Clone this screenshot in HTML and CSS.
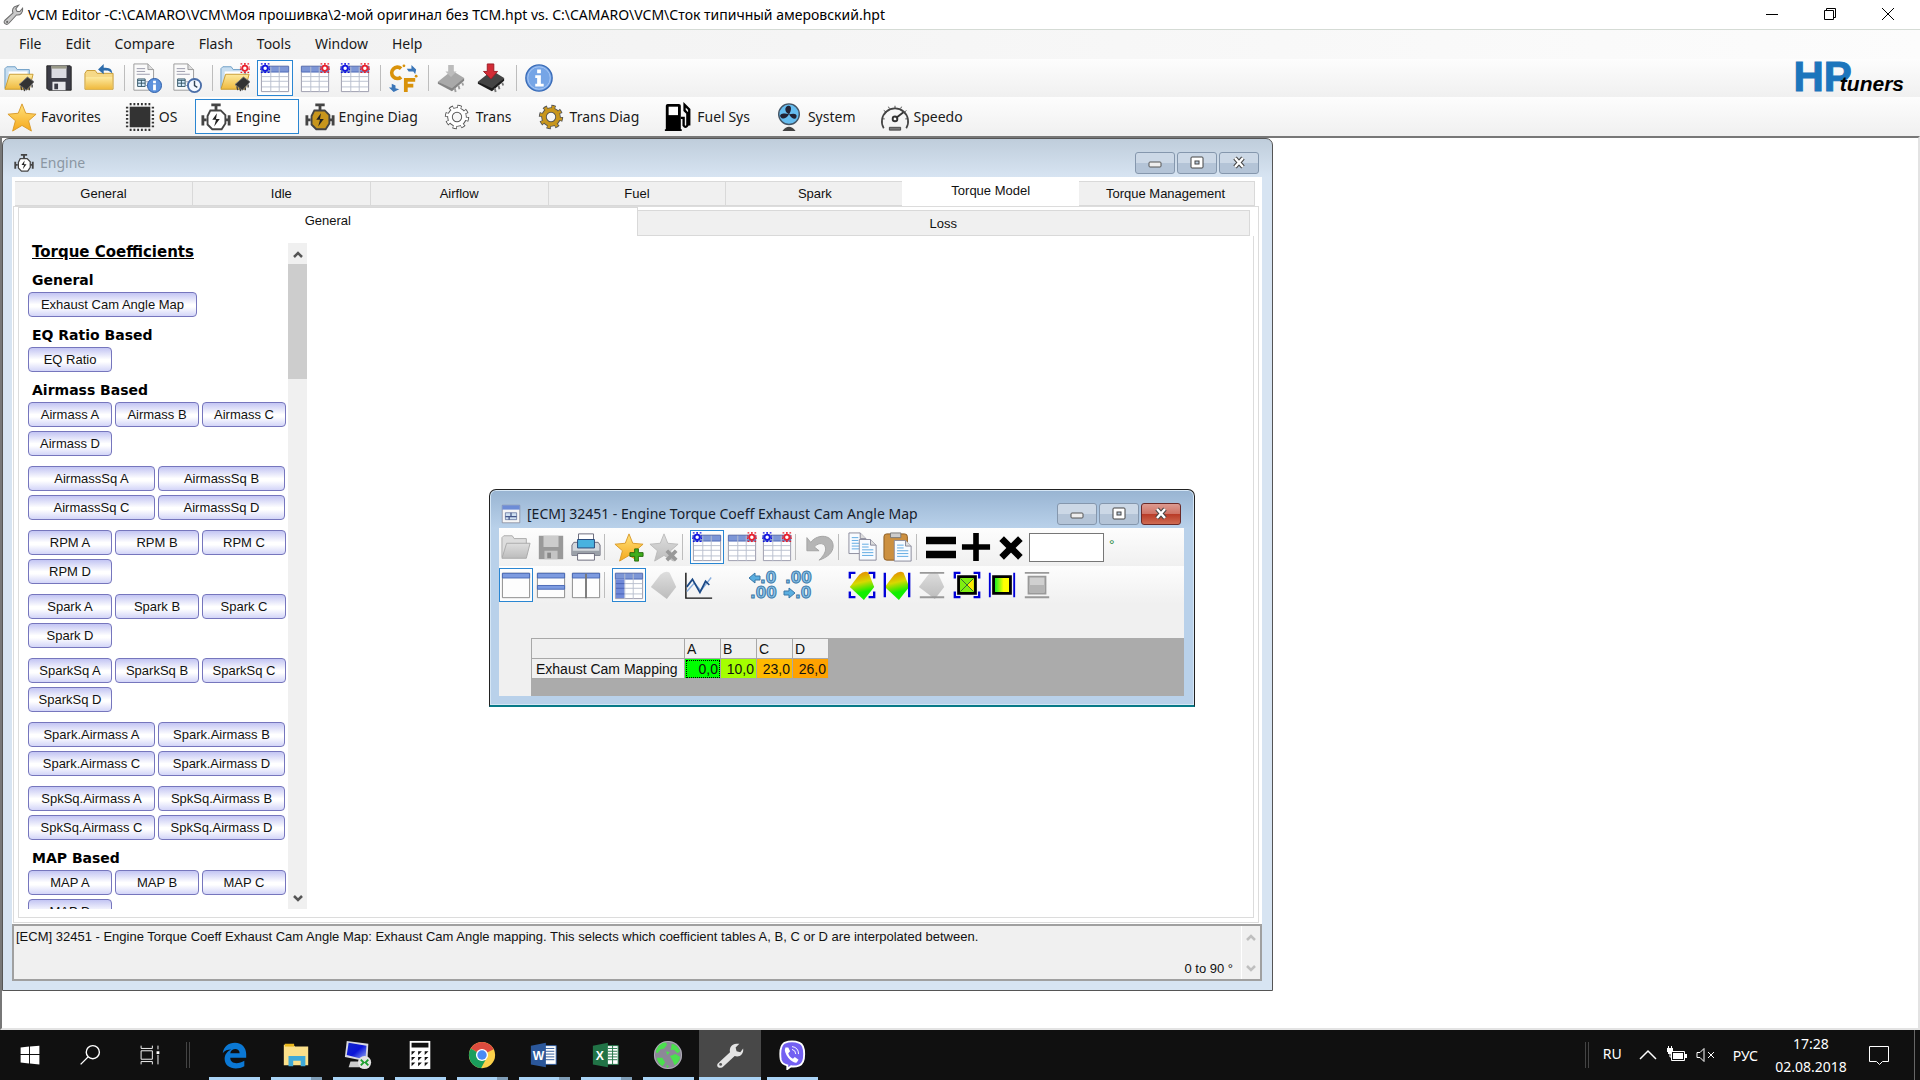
FILE: index.html
```html
<!DOCTYPE html>
<html lang="ru">
<head>
    <meta charset="UTF-8">
    <meta name="viewport" content="width=device-width, initial-scale=1.0">
    <title>VCM Editor</title>
    <link rel="stylesheet" href="styles.css">
</head>
<body>
    <!-- Icon set -->
    <svg class="sprite" aria-hidden="true">
        <defs>
            <linearGradient id="gFolder" x1="0" y1="0" x2="0" y2="1"><stop offset="0" stop-color="#fdeaa0"/><stop offset="1" stop-color="#efb93d"/></linearGradient>
            <linearGradient id="gGrey" x1="0" y1="0" x2="0" y2="1"><stop offset="0" stop-color="#dedede"/><stop offset="1" stop-color="#bcbcbc"/></linearGradient>
            <linearGradient id="gStar" x1="0" y1="0" x2="0" y2="1"><stop offset="0" stop-color="#ffe27a"/><stop offset="1" stop-color="#f5a81c"/></linearGradient>
            <linearGradient id="gHeat" x1="0" y1="0" x2="0.2" y2="1"><stop offset="0" stop-color="#e87a00"/><stop offset="0.45" stop-color="#d8d800"/><stop offset="0.8" stop-color="#10ee00"/></linearGradient>
            <linearGradient id="gBox" x1="0" y1="0" x2="1" y2="0"><stop offset="0.1" stop-color="#22ee22"/><stop offset="0.6" stop-color="#ffff00"/></linearGradient>
            <linearGradient id="gScreen" x1="0" y1="0" x2="1" y2="1"><stop offset="0" stop-color="#1428c8"/><stop offset="0.5" stop-color="#0a14d8"/><stop offset="1" stop-color="#9db4f5"/></linearGradient>
        </defs>
        <symbol id="wrench" viewBox="0 0 32 32"><path d="M4 24 16 13c-2-4 0-9 5-10l3-1-4 5 2 4 4 0 4-5c1 6-3 11-9 10L10 28c-4 4-9-1-6-4z" fill="#c9c9c9" stroke="#6d6d6d" stroke-width="1.5"/><circle cx="7.500" cy="26" r="1.500" fill="#666"/></symbol>
        <symbol id="chipmini" viewBox="0 0 32 32"><path d="M16 23 25 15l7 5-8 9z" fill="#333" stroke="#777" stroke-width="1"/><path d="m18 25 1 4m2-3 1 4m5-4v3m3-6v3" stroke="#444" stroke-width="1.500"/></symbol>
        <symbol id="folder" viewBox="0 0 32 32"><path d="M1 27V6l2-2h9l2 3h13v6" fill="#c8def0" stroke="#6a9cc4"/><path d="M5 9h20v4H5z" fill="#fff"/><path d="M1 28 6 12h25l-4 16z" fill="url(#gFolder)" stroke="#c79a30"/></symbol>
        <symbol id="open" viewBox="0 0 32 32"><use href="#folder"/><use href="#chipmini"/></symbol>
        <symbol id="save" viewBox="0 0 32 32"><path d="M3 3h25l1 1v25H5l-2-2z" fill="#3c3c46" stroke="#222"/><path d="M8 3h16v13H8z" fill="#dcdce2"/><path d="M8 3h16v3H8z" fill="#998"/><path d="M9 20h14v9H9z" fill="#e8e8ec"/><path d="M11 22h4v6h-4z" fill="#3c3c46"/></symbol>
        <symbol id="close" viewBox="0 0 32 32"><path d="M1 28V11l2-3h9l2 3h17v17z" fill="#f6d987" stroke="#c79a30"/><path d="M2 15h28v13H2z" fill="url(#gFolder)"/><path d="M30 11c0-5-3-6-9-6V1l-6 6 6 5V8c4 0 6 0 9 3z" fill="#2d6cab"/></symbol>
        <symbol id="page" viewBox="0 0 32 32"><path d="M2 1h15l6 6v22H2z" fill="#fafafa" stroke="#999"/><path d="M17 1v6h6" fill="#ddd" stroke="#999"/><path d="M5 6h9M5 9h9M5 12h14M15 20h5M15 24h4" stroke="#99a" /><path d="M6 17h8v8H6z" fill="#d9efff" stroke="#356" /><path d="M6 18.500h8M10 18v7M6 21.500h8" stroke="#356"/></symbol>
        <symbol id="pageinfo" viewBox="0 0 32 32"><use href="#page"/><circle cx="24" cy="24" r="7.500" fill="#5c91dc" stroke="#2a5ca8"/><path d="M24 19v2.500M24 23v6" stroke="#fff" stroke-width="3"/></symbol>
        <symbol id="pageclock" viewBox="0 0 32 32"><use href="#page"/><circle cx="24" cy="24" r="7" fill="#f4f8ff" stroke="#4a6ea8" stroke-width="2"/><path d="M24 19v5l3 2" fill="none" stroke="#345" stroke-width="1.500"/></symbol>
        <symbol id="spark" viewBox="0 0 12 12"><path d="M1 1h2M5 1h2M9 1h2M1 11h2M5 11h2M9 11h2M1 4v1M11 4v1M1 7v1M11 7v1" stroke="currentColor" stroke-width="1.500"/><path d="M6 0v12M0 6h12" stroke="currentColor"/><circle cx="6" cy="6" r="3" fill="#fff" stroke="currentColor" stroke-width="2"/></symbol>
        <symbol id="openstar" viewBox="0 0 32 32"><use href="#open"/><use href="#spark" class="red" x="21" y="0" width="11" height="11"/></symbol>
        <symbol id="grid" viewBox="0 0 32 32"><path d="M1.500 3.500h29v27h-29z" fill="#fff" stroke="#99a"/><path d="M2 4h28v6H2z" fill="#7d96d6"/><path d="M1.500 3.500h29v6h-29z" fill="none" stroke="#5670b8"/><path d="M2 14.500h28M2 19.500h28M2 25.500h28M11.500 4v27M20.500 4v27" stroke="#b9bfce"/></symbol>
        <symbol id="grid1" viewBox="0 0 32 32"><use href="#grid"/><use href="#spark" class="blue" width="11" height="11"/></symbol>
        <symbol id="grid2" viewBox="0 0 32 32"><use href="#grid"/><use href="#spark" class="red" x="21" width="11" height="11"/></symbol>
        <symbol id="grid3" viewBox="0 0 32 32"><use href="#grid"/><use href="#spark" class="blue" width="11" height="11"/><use href="#spark" class="red" x="21" width="11" height="11"/></symbol>
        <symbol id="units" viewBox="0 0 32 32"><path d="M14 6a6 6 0 1 0 0 9" fill="none" stroke="#d9920a" stroke-width="4"/><path d="M19 31V18h10M19 24h8" fill="none" stroke="#d9920a" stroke-width="4"/><circle cx="17" cy="3" r="1.500" fill="#d9920a"/><circle cx="30" cy="14" r="1.500" fill="#d9920a"/><path d="M20 6h5V2l5 5-1 5-2-3h-5zM4 22v4H1l5 5 6-3-4-1v-3z" fill="#3b76b8"/></symbol>
        <symbol id="chipgrey" viewBox="0 0 32 32"><path d="M2 20 17 8l13 8-13 13z" fill="#a9a9a9"/><path d="m2 20 15 7v3L2 22zM17 27l13-11v3L17 30z" fill="#858585"/><path d="m20 27 1 4m3-7 1 4m3-7 1 3" stroke="#a0a0a0" stroke-width="2"/><path d="M13 2h6v7h3l-6 6-6-6h3z" fill="#bcbcbc"/></symbol>
        <symbol id="chipred" viewBox="0 0 32 32"><path d="M2 20 17 8l13 8-13 13z" fill="#444"/><path d="m2 20 15 7v3L2 22zM17 27l13-11v3L17 30z" fill="#1c1c1c"/><path d="m20 27 1 4m3-7 1 4m3-7 1 3" stroke="#777" stroke-width="2"/><path d="M12 1h7v8h4l-7 8-8-8h4z" fill="#d22c36" stroke="#9c1c24"/></symbol>
        <symbol id="info" viewBox="0 0 32 32"><circle cx="16" cy="16" r="14" fill="#76a5e6" stroke="#3a6cb8" stroke-width="1.500"/><circle cx="16" cy="16" r="12" fill="none" stroke="#a9c8f4"/><path d="M14 7h4v4h-4zM12 13h6v9h3v3h-9v-3h2v-6h-2z" fill="#fff"/></symbol>
        <symbol id="star" viewBox="0 0 32 32"><path d="m16 2 4 10 11 1-8 7 3 11-10-6-10 6 3-11-8-7 11-1z" fill="url(#gStar)" stroke="#d99a2a"/></symbol>
        <symbol id="os" viewBox="0 0 32 32"><path d="M6 1v30M10 1v30M14 1v30M18 1v30M22 1v30M26 1v30M1 6h30M1 10h30M1 14h30M1 18h30M1 22h30M1 26h30" stroke="#333" stroke-width="2"/><path d="M3.500 3.500h25v25h-25z" fill="#f8f8f8"/><path d="M5 5h22v22H5z" fill="#333"/></symbol>
        <symbol id="engine" viewBox="0 0 32 32"><path d="M11 3h10M16 4v5" stroke="#444" stroke-width="3"/><path d="M10 9h11l5 5v9l-4 6H12l-5-5v-9z" fill="currentColor" stroke="#444" stroke-width="2"/><path d="M2 14v11M6 19H2M30 14v11M26 19h4" stroke="#444" stroke-width="3"/><path d="m17 12-5 7h4l-2 7 6-8h-4z" fill="#222"/></symbol>
        <symbol id="gear" viewBox="0 0 32 32"><circle cx="16" cy="16" r="10.500" fill="none" stroke="#555" stroke-width="5" stroke-dasharray="4.200 4.050"/><circle cx="16" cy="16" r="7.500" fill="none" stroke="#555" stroke-width="6"/><circle cx="16" cy="16" r="10" fill="none" stroke="currentColor" stroke-width="4" stroke-dasharray="2.800 5.050" stroke-dashoffset="-0.700"/><circle cx="16" cy="16" r="7.500" fill="none" stroke="currentColor" stroke-width="4"/></symbol>
        <symbol id="fuel" viewBox="0 0 32 32"><path d="M3 29V4q0-2 2-2h12q2 0 2 2v25h1v2H2v-2z"/><path d="M6 5h10v9H6z" fill="#fff"/><path d="M19 17h3v8q2 3 4 0V12l-3-3V3l5 5v17" fill="none" stroke="#000" stroke-width="2.500"/></symbol>
        <symbol id="fan" viewBox="0 0 32 32"><circle cx="16" cy="13" r="11" fill="#66bdf0" stroke="#456" stroke-width="1.500"/><path d="M16 13c-5-2-5-8-1-9s4 5 1 9c-3 5-7 6-9 3s3-5 9-3c5-1 9-1 8 3s-6 1-8-3" fill="#223"/><path d="M9 31q7-9 14 0z" fill="#444"/></symbol>
        <symbol id="gauge" viewBox="0 0 32 32"><path d="M4 28A14 14 0 1 1 28 28" fill="none" stroke="#444" stroke-width="1.800"/><path d="m4 9 3 2M16 4v3M28 9l-2 2M2 18h3M27 18h3M9 5l1 2M23 5l-1 2" stroke="#444"/><circle cx="16" cy="18" r="2.500" fill="#fff" stroke="#333" stroke-width="2"/><path d="m17 17 8-6" stroke="#333" stroke-width="2"/><path d="M10 27h12v3H10z" fill="#777" stroke="#444"/></symbol>
        <symbol id="form" viewBox="0 0 32 32"><path d="M2 2h28v28H2z" fill="#f6f6f6" stroke="#778"/><path d="M2 2h28v7H2z" fill="#6d8cd6"/><path d="M7 14h18v11H7z" fill="#cfe0f2" stroke="#458"/><path d="M16 14v6M7 20h18M13 20v5" stroke="#458" stroke-width="2"/></symbol>
        <symbol id="foldergrey" viewBox="0 0 32 32"><path d="M1 27V6l2-2h9l2 3h13v6" fill="#ddd" stroke="#aaa"/><path d="M1 28 6 12h25l-4 16z" fill="url(#gGrey)" stroke="#aaa"/></symbol>
        <symbol id="savegrey" viewBox="0 0 32 32"><path d="M3 4h26v25H3z" fill="#999"/><path d="M8 4h16v12H8z" fill="#ccc"/><path d="M9 20h14v9H9z" fill="#c4c4c4"/><path d="M12 22h4v6h-4z" fill="#888"/></symbol>
        <symbol id="printer" viewBox="0 0 32 32"><path d="M8 2h16v12H8z" fill="#fff" stroke="#667"/><path d="M3 11h26l2 3v11H1V14z" fill="#d3d7dc" stroke="#667"/><path d="M7 8h18v9H7z" fill="#49b2df" stroke="#247"/><path d="M1 20h30v5H1z" fill="#9aa0a8"/><path d="M7 23h18v7H7z" fill="#fff" stroke="#667"/></symbol>
        <symbol id="starplus" viewBox="0 0 32 32"><use href="#star"/><path d="M22 18h4v4h5v4h-5v5h-4v-5h-5v-4h5z" fill="#3fae1c" stroke="#226a0c"/></symbol>
        <symbol id="stargrey" viewBox="0 0 32 32"><path d="m16 2 4 10 11 1-8 7 3 11-10-6-10 6 3-11-8-7 11-1z" fill="url(#gGrey)" stroke="#bbb"/><path d="m19 20 10 10M29 20 19 30" stroke="#999" stroke-width="4"/></symbol>
        <symbol id="undo" viewBox="0 0 32 32"><path d="M2 6v14h13l-5-4c5-6 12-4 12 2 0 4-3 8-7 12 9-3 15-8 15-15C30 3 14 1 6 11z" fill="#b5b5b5" stroke="#a2a2a2"/></symbol>
        <symbol id="sheet" viewBox="0 0 20 24"><path d="M1 1h12l6 6v16H1z" fill="#f8fbff" stroke="#889"/><path d="M13 1v6h6" fill="#ddd" stroke="#889"/><path d="M4 6h7M4 9h7M4 12h12M4 15h12M4 18h12" stroke="#5aa8e2"/></symbol>
        <symbol id="copy" viewBox="0 0 32 32"><use href="#sheet" width="20" height="24"/><use href="#sheet" x="11" y="7" width="20" height="24"/></symbol>
        <symbol id="paste" viewBox="0 0 32 32"><rect x="1" y="2" width="25" height="28" rx="3" fill="#cc9040" stroke="#8a5a20"/><path d="M8 1h11v5H8z" fill="#ccc" stroke="#777"/><use href="#sheet" x="11" y="8" width="20" height="24"/></symbol>
        <symbol id="equal" viewBox="0 0 32 32"><path d="M0 5h32v8H0zM0 20h32v8H0z"/></symbol>
        <symbol id="plus" viewBox="0 0 32 32"><path d="M13 1h6v12h12v6H19v12h-6V19H1v-6h12z"/></symbol>
        <symbol id="times" viewBox="0 0 32 32"><path d="m6 7 20 20M26 7 6 27" stroke="#000" stroke-width="7"/></symbol>
        <symbol id="win1" viewBox="0 0 32 32"><path d="M1.500 3.500h29v26h-29z" fill="#fdfdfd" stroke="#888"/><path d="M1.500 3.500h29v5h-29z" fill="#7d9be0" stroke="#4666b4"/></symbol>
        <symbol id="win2" viewBox="0 0 32 32"><use href="#win1"/><path d="M1.500 16.500h29v4h-29z" fill="#7d9be0" stroke="#4666b4"/></symbol>
        <symbol id="win3" viewBox="0 0 32 32"><use href="#win1"/><path d="M16 4v26" stroke="#777" stroke-width="2"/></symbol>
        <symbol id="tbl" viewBox="0 0 32 32"><use href="#grid"/><path d="M2 10h9v20H2z" fill="#7089d8"/><path d="M2 14.500h9M2 19.500h9M2 25.500h9" stroke="#4a62b4"/></symbol>
        <symbol id="surfgrey" viewBox="0 0 32 32"><path d="M2 18 12 5q6-5 10-2l7 15-10 13z" fill="url(#gGrey)"/></symbol>
        <symbol id="chart" viewBox="0 0 32 32"><path d="M2 3v27h28" fill="none" stroke="#111" stroke-width="1.500"/><path d="m3 23 8-9 7 8L29 8" fill="none" stroke="#88aede" stroke-width="1.500"/><path d="m3 18 6-8 8 14 6-12 4 4" fill="none" stroke="#1d4a86" stroke-width="1.800"/></symbol>
        <symbol id="heat" viewBox="0 0 32 32"><path d="M3 18 13 5q6-5 10-2l6 15-11 14z" fill="url(#gHeat)"/></symbol>
        <symbol id="corners" viewBox="0 0 32 32"><path d="M3 9V3h6M23 3h6v6M29 23v6h-6M9 29H3v-6" fill="none" stroke="#0000d8" stroke-width="2.500"/></symbol>
        <symbol id="heatall" viewBox="0 0 32 32"><use href="#heat"/><use href="#corners"/></symbol>
        <symbol id="heatx" viewBox="0 0 32 32"><use href="#heat"/><path d="M3 3v26M29 3v26" stroke="#0000d8" stroke-width="2.500"/></symbol>
        <symbol id="heaty" viewBox="0 0 32 32"><use href="#surfgrey"/><path d="M3 3h26M3 29h26" stroke="#999" stroke-width="2"/></symbol>
        <symbol id="boxall" viewBox="0 0 32 32"><path d="M7 7h18v18H7z" fill="#7fee10" stroke="#000" stroke-width="3"/><path d="m16 16 7 7V9z" fill="#ffe800"/><path d="m9 9 14 14M23 9 9 23" stroke="#363"/><use href="#corners"/></symbol>
        <symbol id="boxx" viewBox="0 0 32 32"><path d="M7 7h18v18H7z" fill="url(#gBox)" stroke="#000" stroke-width="3"/><path d="M3 3v26M29 3v26" stroke="#0000d8" stroke-width="2"/></symbol>
        <symbol id="boxy" viewBox="0 0 32 32"><path d="M7 7h18v18H7z" fill="#d0d0d0" stroke="#999" stroke-width="2"/><path d="M8 16h16v8H8z" fill="#b4b4b4"/><path d="M3 3h26M3 29h26" stroke="#999" stroke-width="2"/></symbol>
        <symbol id="up" viewBox="0 0 12 12"><path d="m2 9 4-4 4 4" fill="none" stroke="currentColor" stroke-width="2.500"/></symbol>
        <symbol id="down" viewBox="0 0 12 12"><path d="m2 3 4 4 4-4" fill="none" stroke="currentColor" stroke-width="2.500"/></symbol>
        <symbol id="cmin" viewBox="0 0 16 16"><rect x="2" y="7" width="12" height="5" rx="1" fill="#eee" stroke="#555"/></symbol>
        <symbol id="cmax" viewBox="0 0 16 16"><rect x="2" y="2" width="12" height="11" rx="1" fill="#fff" stroke="#444"/><rect x="6" y="6" width="4" height="3" fill="#bcd" stroke="#444"/></symbol>
        <symbol id="cclose" viewBox="0 0 16 16"><path d="m4 3 8 9M12 3l-8 9" stroke="#444" stroke-width="4.500"/><path d="m4 3 8 9M12 3l-8 9" stroke="#fff" stroke-width="2.500"/></symbol>
        <symbol id="min" viewBox="0 0 12 12"><path d="M0 6.500h12" stroke="#000"/></symbol>
        <symbol id="restore" viewBox="0 0 12 12"><path d="M.5 2.500h9v9h-9zM2.500 2V.5h9v9H10" fill="none" stroke="#000"/></symbol>
        <symbol id="x" viewBox="0 0 12 12"><path d="m0 0 12 12M12 0 0 12" stroke="#000"/></symbol>
    </svg>

    <header class="titlebar">
        <svg class="app-icon"><use href="#wrench"/></svg>
        <span class="caption">VCM Editor -C:\CAMARO\VCM\Моя прошивка\2-мой оригинал без TCM.hpt vs. C:\CAMARO\VCM\Сток типичный амеровский.hpt</span>
        <div class="sys-buttons">
            <button type="button" aria-label="Minimize"><svg><use href="#min"/></svg></button>
            <button type="button" aria-label="Restore"><svg><use href="#restore"/></svg></button>
            <button type="button" aria-label="Close"><svg><use href="#x"/></svg></button>
        </div>
    </header>

    <nav class="menubar">
        <button type="button">File</button>
        <button type="button">Edit</button>
        <button type="button">Compare</button>
        <button type="button">Flash</button>
        <button type="button">Tools</button>
        <button type="button">Window</button>
        <button type="button">Help</button>
    </nav>

    <div class="toolbar">
        <button type="button" aria-label="Open"><svg><use href="#open"/></svg></button>
        <button type="button" aria-label="Save"><svg><use href="#save"/></svg></button>
        <button type="button" aria-label="Close file"><svg><use href="#close"/></svg></button>
        <span class="sep"></span>
        <button type="button" aria-label="File info"><svg><use href="#pageinfo"/></svg></button>
        <button type="button" aria-label="File history"><svg><use href="#pageclock"/></svg></button>
        <span class="sep"></span>
        <button type="button" aria-label="Open compare"><svg><use href="#openstar"/></svg></button>
        <button type="button" class="on" aria-label="Show main"><svg><use href="#grid1"/></svg></button>
        <button type="button" aria-label="Show compare"><svg><use href="#grid2"/></svg></button>
        <button type="button" aria-label="Show difference"><svg><use href="#grid3"/></svg></button>
        <span class="sep"></span>
        <button type="button" aria-label="Units"><svg><use href="#units"/></svg></button>
        <span class="sep"></span>
        <button type="button" aria-label="Read vehicle"><svg><use href="#chipgrey"/></svg></button>
        <button type="button" aria-label="Write vehicle"><svg><use href="#chipred"/></svg></button>
        <span class="sep"></span>
        <button type="button" aria-label="Info"><svg><use href="#info"/></svg></button>
        <div class="brand"><span class="hp">HP</span><span class="tuners">tuners</span></div>
    </div>

    <div class="navbar">
        <button type="button"><svg><use href="#star"/></svg>Favorites</button>
        <button type="button"><svg><use href="#os"/></svg>OS</button>
        <button type="button" class="on"><svg class="white"><use href="#engine"/></svg>Engine</button>
        <button type="button"><svg class="gold"><use href="#engine"/></svg>Engine Diag</button>
        <button type="button"><svg class="white"><use href="#gear"/></svg>Trans</button>
        <button type="button"><svg class="gold"><use href="#gear"/></svg>Trans Diag</button>
        <button type="button"><svg><use href="#fuel"/></svg>Fuel Sys</button>
        <button type="button"><svg><use href="#fan"/></svg>System</button>
        <button type="button"><svg><use href="#gauge"/></svg>Speedo</button>
    </div>

    <main class="mdi">
        <!-- Engine window -->
        <section class="window engine-window">
            <div class="window-title">
                <svg class="white"><use href="#engine"/></svg>
                <span>Engine</span>
                <div class="window-buttons">
                    <button type="button" aria-label="Minimize"><svg><use href="#cmin"/></svg></button>
                    <button type="button" aria-label="Maximize"><svg><use href="#cmax"/></svg></button>
                    <button type="button" aria-label="Close"><svg><use href="#cclose"/></svg></button>
                </div>
            </div>
            <div class="window-body engine-body">
                <div class="tabs">
                    <button type="button">General</button>
                    <button type="button">Idle</button>
                    <button type="button">Airflow</button>
                    <button type="button">Fuel</button>
                    <button type="button">Spark</button>
                    <button type="button" class="active">Torque Model</button>
                    <button type="button">Torque Management</button>
                </div>
                <div class="tab-page">
                    <div class="tabs subtabs">
                        <button type="button" class="active">General</button>
                        <button type="button">Loss</button>
                    </div>
                    <div class="subpage">
                        <div class="coeffs">
                            <h2>Torque Coefficients</h2>
                            <h3>General</h3>
                            <div class="group"><button type="button" class="long">Exhaust Cam Angle Map</button></div>
                            <h3>EQ Ratio Based</h3>
                            <div class="group"><button type="button">EQ Ratio</button></div>
                            <h3>Airmass Based</h3>
                            <div class="group">
                                <button type="button">Airmass A</button>
                                <button type="button">Airmass B</button>
                                <button type="button">Airmass C</button>
                                <button type="button">Airmass D</button>
                            </div>
                            <div class="group wide">
                                <button type="button">AirmassSq A</button>
                                <button type="button">AirmassSq B</button>
                                <button type="button">AirmassSq C</button>
                                <button type="button">AirmassSq D</button>
                            </div>
                            <div class="group">
                                <button type="button">RPM A</button>
                                <button type="button">RPM B</button>
                                <button type="button">RPM C</button>
                                <button type="button">RPM D</button>
                            </div>
                            <div class="group">
                                <button type="button">Spark A</button>
                                <button type="button">Spark B</button>
                                <button type="button">Spark C</button>
                                <button type="button">Spark D</button>
                            </div>
                            <div class="group">
                                <button type="button">SparkSq A</button>
                                <button type="button">SparkSq B</button>
                                <button type="button">SparkSq C</button>
                                <button type="button">SparkSq D</button>
                            </div>
                            <div class="group wide">
                                <button type="button">Spark.Airmass A</button>
                                <button type="button">Spark.Airmass B</button>
                                <button type="button">Spark.Airmass C</button>
                                <button type="button">Spark.Airmass D</button>
                            </div>
                            <div class="group wide">
                                <button type="button">SpkSq.Airmass A</button>
                                <button type="button">SpkSq.Airmass B</button>
                                <button type="button">SpkSq.Airmass C</button>
                                <button type="button">SpkSq.Airmass D</button>
                            </div>
                            <h3>MAP Based</h3>
                            <div class="group">
                                <button type="button">MAP A</button>
                                <button type="button">MAP B</button>
                                <button type="button">MAP C</button>
                                <button type="button">MAP D</button>
                            </div>
                        </div>
                        <div class="scrollbar">
                            <button type="button" aria-label="Scroll up"><svg><use href="#up"/></svg></button>
                            <div class="thumb"></div>
                            <button type="button" class="end" aria-label="Scroll down"><svg><use href="#down"/></svg></button>
                        </div>
                    </div>
                </div>
                <div class="description">
                    <div class="description-text">
                        <p>[ECM] 32451 - Engine Torque Coeff Exhaust Cam Angle Map: Exhaust Cam Angle mapping. This selects which coefficient tables A, B, C or D are interpolated between.</p>
                        <p class="range">0 to 90 °</p>
                    </div>
                    <div class="scrollbar disabled">
                        <button type="button" aria-label="Scroll up"><svg><use href="#up"/></svg></button>
                        <button type="button" class="end" aria-label="Scroll down"><svg><use href="#down"/></svg></button>
                    </div>
                </div>
            </div>
        </section>

        <!-- Table window -->
        <section class="window table-window">
            <div class="window-title">
                <svg><use href="#form"/></svg>
                <span>[ECM] 32451 - Engine Torque Coeff Exhaust Cam Angle Map</span>
                <div class="window-buttons">
                    <button type="button" aria-label="Minimize"><svg><use href="#cmin"/></svg></button>
                    <button type="button" aria-label="Maximize"><svg><use href="#cmax"/></svg></button>
                    <button type="button" class="red-button" aria-label="Close"><svg><use href="#cclose"/></svg></button>
                </div>
            </div>
            <div class="window-body table-body">
                <div class="toolbar small">
                    <button type="button" aria-label="Open"><svg><use href="#foldergrey"/></svg></button>
                    <button type="button" aria-label="Save"><svg><use href="#savegrey"/></svg></button>
                    <button type="button" aria-label="Print"><svg><use href="#printer"/></svg></button>
                    <span class="sep"></span>
                    <button type="button" aria-label="Add favorite"><svg><use href="#starplus"/></svg></button>
                    <button type="button" aria-label="Remove favorite"><svg><use href="#stargrey"/></svg></button>
                    <span class="sep"></span>
                    <button type="button" class="on" aria-label="Show main"><svg><use href="#grid1"/></svg></button>
                    <button type="button" aria-label="Show compare"><svg><use href="#grid2"/></svg></button>
                    <button type="button" aria-label="Show difference"><svg><use href="#grid3"/></svg></button>
                    <span class="sep"></span>
                    <button type="button" aria-label="Undo"><svg><use href="#undo"/></svg></button>
                    <span class="sep"></span>
                    <button type="button" aria-label="Copy"><svg><use href="#copy"/></svg></button>
                    <button type="button" aria-label="Paste"><svg><use href="#paste"/></svg></button>
                    <span class="sep"></span>
                    <button type="button" aria-label="Set"><svg><use href="#equal"/></svg></button>
                    <button type="button" aria-label="Add"><svg><use href="#plus"/></svg></button>
                    <button type="button" aria-label="Multiply"><svg><use href="#times"/></svg></button>
                    <input type="text" class="value" id="value" aria-label="Value">
                    <label for="value" class="unit">°</label>
                </div>
                <div class="toolbar small">
                    <button type="button" class="on" aria-label="Single view"><svg><use href="#win1"/></svg></button>
                    <button type="button" aria-label="Split rows"><svg><use href="#win2"/></svg></button>
                    <button type="button" aria-label="Split columns"><svg><use href="#win3"/></svg></button>
                    <span class="sep"></span>
                    <button type="button" class="on" aria-label="Table"><svg><use href="#tbl"/></svg></button>
                    <button type="button" aria-label="Surface"><svg><use href="#surfgrey"/></svg></button>
                    <button type="button" aria-label="Chart"><svg><use href="#chart"/></svg></button>
                    <span class="space"></span>
                    <button type="button" aria-label="More decimals"><svg viewBox="0 0 30 30"><text x="12" y="13" class="dec">.0</text><text x="2" y="28" class="dec">.00</text><path d="M1 8l6-5v3h5v4H7v3z" class="arrow"/></svg></button>
                    <button type="button" aria-label="Less decimals"><svg viewBox="0 0 30 30"><text x="2" y="13" class="dec">.00</text><text x="12" y="28" class="dec">.0</text><path d="M12 23l-6-5v3H1v4h5v3z" class="arrow"/></svg></button>
                    <span class="space"></span>
                    <button type="button" aria-label="Smooth"><svg><use href="#heatall"/></svg></button>
                    <button type="button" aria-label="Smooth columns"><svg><use href="#heatx"/></svg></button>
                    <button type="button" aria-label="Smooth rows"><svg><use href="#heaty"/></svg></button>
                    <button type="button" aria-label="Interpolate"><svg><use href="#boxall"/></svg></button>
                    <button type="button" aria-label="Interpolate columns"><svg><use href="#boxx"/></svg></button>
                    <button type="button" aria-label="Interpolate rows"><svg><use href="#boxy"/></svg></button>
                </div>
                <div class="grid-area">
                    <table>
                        <thead>
                            <tr><th class="row-head"></th><th>A</th><th>B</th><th>C</th><th>D</th></tr>
                        </thead>
                        <tbody>
                            <tr>
                                <th class="row-head">Exhaust Cam Mapping</th>
                                <td class="lime selected">0,0</td>
                                <td class="yellow">10,0</td>
                                <td class="amber">23,0</td>
                                <td class="orange">26,0</td>
                            </tr>
                        </tbody>
                    </table>
                </div>
            </div>
        </section>
    </main>

    <footer class="taskbar">
        <button type="button" class="shell" aria-label="Start"><svg viewBox="0 0 32 32"><path d="m6 8 9-1v8H6zM16 7l10-1v9H16zM6 16h9v9l-9-1zM16 16h10v10l-10-1z" fill="#fff"/></svg></button>
        <button type="button" class="shell" aria-label="Search"><svg viewBox="0 0 32 32"><circle cx="19" cy="13" r="7" fill="none" stroke="#fff" stroke-width="1.500"/><path d="M14 18 6 26" stroke="#fff" stroke-width="1.500"/></svg></button>
        <button type="button" class="shell" aria-label="Task view"><svg viewBox="0 0 32 32"><path d="M6.500 6v3h12V6M6.500 11.500h12v9h-12zM6.500 26v-3h12v3M24.500 6v4M24.500 16v10" fill="none" stroke="#fff"/><path d="M23 12h3v3h-3z" fill="#fff"/></svg></button>
        <span class="grip"></span>
        <div class="tasks">
            <button type="button" aria-label="Edge"><svg viewBox="0 0 32 32"><path d="M4 14C5 7 10 3 17 3c8 0 12 6 12 12v4H12c0 7 9 7 15 3v6c-9 5-21 2-21-8 0-5 3-8 7-10-4 0-7 1-9 4zm8 0h10c0-6-9-6-10 0z" fill="#0b78d4"/></svg></button>
            <button type="button" class="multi" aria-label="Explorer"><svg viewBox="0 0 32 32"><path d="M3 5h10l2 2h14v20H3z" fill="#fbe08a"/><path d="M4 4h10v3H4z" fill="#e8b71c"/><path d="M8 28V17h18v11h-5v-6h-8v6z" fill="#3fa9d8"/></svg></button>
            <button type="button" aria-label="Remote Desktop"><svg viewBox="0 0 32 32"><path d="m4 1 23 3-1 19L2 18z" fill="#d8d8e0"/><path d="m6 3 19 3-1 15L4 16z" fill="url(#gScreen)"/><path d="M8 23h10l2 6H6z" fill="#ccc"/><circle cx="23" cy="24" r="7" fill="#e4e4e4"/><path d="m19 21 3 3-3 3m8-6-3 3 3 3" fill="none" stroke="#1fa030" stroke-width="2"/></svg></button>
            <button type="button" aria-label="Calculator"><svg viewBox="0 0 32 32"><path d="M5 1h22v30H5z" fill="#fff"/><path d="M7 3h18v5H7zM7 12h4l-4 4zM14 12h4l-4 4zM21 12h4l-4 4zM7 18h4l-4 4zM14 18h4l-4 4zM21 18h4l-4 4zM7 24h4l-4 4zM14 24h4l-4 4zM21 24h4l-4 4z" fill="#111"/></svg></button>
            <button type="button" class="multi" aria-label="Chrome"><svg viewBox="0 0 32 32"><circle cx="16" cy="16" r="14" fill="#fcd14a"/><path d="M16 16 4 9a14 14 0 0 1 24 0v1z" fill="#dc4b3e"/><path d="M4 9a14 14 0 0 0 11 21l6-11-5-3z" fill="#1a9e5c"/><circle cx="16" cy="16" r="6.500" fill="#fff"/><circle cx="16" cy="16" r="5" fill="#4a8af4"/></svg></button>
            <button type="button" class="multi" aria-label="Word"><svg viewBox="0 0 32 32"><path d="M16 6h13v20H16z" fill="#fff" stroke="#2b579a"/><path d="M17 9h10M17 12h10M17 15h10M17 18h10M17 21h10" stroke="#2b579a"/><path d="M2 6 18 3v26L2 26z" fill="#2b579a"/><text x="4" y="21" class="letter">W</text></svg></button>
            <button type="button" class="multi" aria-label="Excel"><svg viewBox="0 0 32 32"><path d="M16 6h13v20H16z" fill="#fff" stroke="#217346"/><path d="M18 9h10M18 12h10M18 15h10M18 18h10M18 21h10M23 6v20" stroke="#217346"/><path d="M2 6 18 3v26L2 26z" fill="#217346"/><text x="5" y="21" class="letter">X</text></svg></button>
            <button type="button" aria-label="Globe"><svg viewBox="0 0 32 32"><circle cx="16" cy="16" r="15" fill="#8d8798"/><path d="M8 4q6-4 7 1l-3 4-4 1-3 4-2-1q1-6 5-9zM20 4q6 1 9 8l-3 2-4-4-3 1zM4 19l6 0 3 5-3 4q-5-3-6-9zM18 17l6-2 5 3q-1 6-6 9l-2-5zM14 12l4 1-3 3zM14 26l3 2-2 2z" fill="#4be04e"/><circle cx="16" cy="16" r="14.500" fill="none" stroke="#b0aeb6"/></svg></button>
            <button type="button" class="current" aria-label="VCM Editor"><svg viewBox="0 0 32 32"><path d="m3 25 13-12c-1-5 2-9 7-9l3 0-4 4 1 4 4 1 3-4c1 6-4 10-9 8L8 29c-4 2-7-1-5-4z" fill="#e4e4e4"/><circle cx="6" cy="26" r="1.500" fill="#555"/></svg></button>
            <button type="button" aria-label="Viber"><svg viewBox="0 0 32 32"><path d="M8 3q8-3 16 0 5 2 5 12t-5 12q-5 2-9 1l-4 3v-4q-6-1-7-6-2-14 4-18z" fill="#7360f2" stroke="#fff" stroke-width="2"/><path d="m9 8 3 0 2 4-2 2q1 4 5 6l2-2 4 3-2 3q-4 1-9-5-5-7-3-11z" fill="#fff"/><path d="M16 7q7 1 7 8M16 10q4 1 4 5" fill="none" stroke="#fff"/></svg></button>
        </div>
        <div class="tray">
            <span class="grip"></span>
            <span class="lang">RU</span>
            <svg viewBox="0 0 20 20"><path d="m2 14 8-8 8 8" fill="none" stroke="#fff" stroke-width="1.500"/></svg>
            <svg viewBox="0 0 20 20"><path d="M4.500 6.500h13v9h-13z" fill="none" stroke="#fff"/><path d="M6 8h10v6H6zM18 9h2v4h-2z" fill="#fff"/><path d="M0 3h6v4H5v2H1V7H0z" fill="#fff"/><path d="M1.500 1v2M4.500 1v2M3 9v3h2" fill="none" stroke="#fff"/></svg>
            <svg viewBox="0 0 20 20"><path d="M1 7.500h3l4-4v13l-4-4H1zM12 7l6 6M18 7l-6 6" fill="none" stroke="#fff"/></svg>
            <span class="layout">РУС</span>
            <div class="clock"><time>17:28</time><time>02.08.2018</time></div>
            <svg class="action" viewBox="0 0 22 22"><path d="M1.500 2.500h19v15h-6l-3 3-3-3h-7z" fill="none" stroke="#fff"/></svg>
            <span class="peek"></span>
        </div>
    </footer>
</body>
</html>
```
FILE: styles.css
```css
* {
    box-sizing: border-box;
}
body {
    margin: 0;
    height: 100vh;
    display: flex;
    flex-direction: column;
    overflow: hidden;
    background: #fff;
    font-family: "Noto Sans", "Open Sans", sans-serif;
    font-size: 14px;
    color: #1a1a1a;
}
button {
    border: 1px solid transparent;
    background: none;
    margin: 0;
    padding: 0;
    font: inherit;
    color: inherit;
}
svg {
    flex: none;
}
.sprite {
    position: absolute;
    width: 0;
    height: 0;
}
.red {
    color: #e8202c;
}
.blue {
    color: #1414e0;
}
.white {
    color: #fff;
}
.gold {
    color: #c8961c;
}
.dec {
    font: bold 15px "DejaVu Sans", sans-serif;
    fill: #8cc4ea;
    stroke: #3a78a8;
    stroke-width: 1px;
}
.arrow {
    fill: #5aaee0;
    stroke: #3a78a8;
}

/* Title bar and menu */
.titlebar {
    display: flex;
    align-items: center;
    height: 30px;
    padding: 0 3px 0 2px;
    border-bottom: 1px solid #d5dbd5;
    color: #000;
}
.app-icon {
    width: 22px;
    height: 22px;
    margin-right: 4px;
}
.sys-buttons {
    display: flex;
    margin-left: auto;
}
.sys-buttons button {
    width: 58px;
    height: 28px;
}
.sys-buttons svg {
    width: 12px;
    height: 12px;
}
.menubar {
    display: flex;
    height: 29px;
    padding: 0 0 2px 7px;
    background: linear-gradient(90deg, #f0f0f0, #fcfcfc);
}
.menubar button {
    padding: 0 11px;
}

/* Toolbars */
.toolbar {
    display: flex;
    align-items: center;
    gap: 4px;
    height: 38px;
    padding-left: 1px;
    background: linear-gradient(#fdfdfd, #f0f0f0);
}
.toolbar button {
    display: flex;
    align-items: center;
    justify-content: center;
    width: 36px;
    height: 36px;
}
.toolbar svg {
    width: 30px;
    height: 30px;
}
.toolbar .on, .navbar .on {
    border-color: #2a86d2;
    background: #fdfdfd;
}
.sep {
    width: 4px;
    height: 26px;
    border-right: 1px solid #bdbdbd;
}
.brand {
    display: flex;
    align-items: baseline;
    margin-left: auto;
    margin-right: 16px;
    padding-top: 4px;
    font-family: "Liberation Sans", sans-serif;
    font-weight: bold;
    line-height: 38px;
}
.hp {
    font-size: 42px;
    color: #1c75bc;
    -webkit-text-stroke: 1px #1c75bc;
}
.tuners {
    margin-left: -12px;
    font-size: 21px;
    font-style: italic;
    color: #000;
}
.navbar {
    display: flex;
    align-items: center;
    height: 39px;
    padding-left: 1px;
    background: linear-gradient(#fdfdfd, #f0f0f0);
}
.navbar button {
    display: flex;
    align-items: center;
    height: 35px;
    padding: 0 17px 0 4px;
}
.navbar svg {
    width: 32px;
    height: 30px;
    margin-right: 3px;
}

/* Child windows */
.mdi {
    position: relative;
    flex: 1;
    border: 2px solid #777;
    border-right-color: #e3e3e3;
    border-bottom-color: #e3e3e3;
}
.window {
    position: absolute;
    display: flex;
    flex-direction: column;
    padding: 0 10px 9px 9px;
    border: 1px solid #555;
    border-radius: 7px 7px 0 0;
}
.engine-window {
    left: 0;
    top: 0;
    width: 1271px;
    height: 853px;
    background: linear-gradient(#bfcddb, #d7e4f2 38px);
}
.table-window {
    left: 487px;
    top: 351px;
    width: 706px;
    height: 218px;
    border-color: #222;
    border-bottom: 2px solid #087a88;
    box-shadow: inset 0 0 0 1px #d5e6f5;
    background: linear-gradient(#98b4d2, #b9d1ea 38px);
}
.window-title {
    display: flex;
    align-items: center;
    height: 38px;
    padding-top: 9px;
    color: #16202c;
}
.engine-window .window-title {
    color: #8b97a3;
}
.window-title > svg {
    width: 20px;
    height: 20px;
    margin: 0 6px 0 2px;
}
.window-buttons {
    display: flex;
    gap: 2px;
    margin-left: auto;
    margin-right: 3px;
}
.window-buttons button {
    display: flex;
    align-items: center;
    justify-content: center;
    width: 40px;
    height: 22px;
    border: 1px solid #8597ad;
    border-radius: 3px;
    background: linear-gradient(#ccd8e6 50%, #b4c4d7 50%);
}
.window-buttons svg {
    width: 16px;
    height: 16px;
}
.window-buttons .red-button {
    border-color: #6a2a28;
    background: linear-gradient(#dc9a90 0, #cf7466 48%, #b83a26 50%, #cf6b52);
}
.window-body {
    flex: 1;
    display: flex;
    flex-direction: column;
    min-height: 0;
    font-family: "Liberation Sans", Arial, sans-serif;
    color: #111;
}
.engine-body {
    background: #fff;
    font-size: 13px;
}

/* Tabs */
.tabs {
    display: flex;
    align-items: flex-end;
    height: 29px;
    padding: 0 7px 0 3px;
}
.tabs button {
    flex: 1 1 0;
    height: 25px;
    border: 1px solid #d9d9d9;
    border-left-width: 0;
    background: #f0f0f0;
}
.tabs .active {
    position: relative;
    height: 29px;
    margin: 0 -2px;
    padding-bottom: 2px;
    border-width: 0;
    background: #fff;
}
.tab-page {
    flex: 1;
    display: flex;
    flex-direction: column;
    min-height: 0;
    margin: 0 3px 0 1px;
    padding: 0 4px 4px;
    border: 1px solid #dcdcdc;
}
.subtabs {
    padding: 0 4px 0 0;
    border-left: 1px solid #dcdcdc;
}
.subtabs button {
    height: 26px;
}
.subtabs .active {
    margin: 0;
    flex-grow: 1.01;
    height: 29px;
    border-top-width: 1px;
    border-right-width: 1px;
    padding-bottom: 3px;
}
.subpage {
    flex: 1;
    display: flex;
    min-height: 0;
    padding: 7px 0 8px 9px;
    border: 1px solid #dcdcdc;
    border-top: 0;
}
.coeffs {
    width: 260px;
    overflow: hidden;
}
.coeffs h2, .coeffs h3 {
    margin: 0;
    padding-left: 4px;
    font-family: "DejaVu Sans", Verdana, sans-serif;
    font-size: 14px;
    color: #000;
}
.coeffs h2 {
    height: 19px;
    font-size: 15px;
    line-height: 18px;
    text-decoration: underline;
}
.coeffs h3 {
    padding-top: 7px;
    line-height: 23px;
}
.group {
    display: flex;
    flex-wrap: wrap;
    gap: 4px 3px;
}
.group + .group {
    margin-top: 10px;
}
.group button {
    width: 84px;
    height: 25px;
    border: 1px solid #7676bd;
    border-radius: 4px;
    background: linear-gradient(#c3c5f3, #fff 50%, #fff 60%, #d3d5f8);
}
.group .long {
    width: 169px;
}
.wide button {
    width: 127px;
}
.scrollbar {
    display: flex;
    flex-direction: column;
    width: 19px;
    background: #f0f0f0;
    color: #555;
}
.scrollbar button {
    display: flex;
    align-items: center;
    justify-content: center;
    height: 21px;
}
.scrollbar svg {
    width: 12px;
    height: 12px;
}
.scrollbar .end {
    margin-top: auto;
}
.thumb {
    height: 115px;
    background: #cdcdcd;
}
.disabled {
    color: #bfbfbf;
    border-left: 1px solid #fff;
}
.description {
    display: flex;
    height: 57px;
    margin-top: 1px;
    border: 2px solid #a0a0a0;
    background: #f0f0f0;
}
.description-text {
    flex: 1;
    display: flex;
    flex-direction: column;
    justify-content: space-between;
    padding: 2px 8px 1px 2px;
}
.description p {
    margin: 0;
    line-height: 18px;
}
.description .range {
    text-align: right;
}

/* Table window */
.table-body {
    background: #f0f0f0;
}
.small {
    gap: 1px;
    height: 38px;
    padding: 0;
}
.small button {
    width: 34px;
    height: 34px;
}
.small .sep {
    width: 7px;
    border-right: 0;
    border-left: 1px solid #bdbdbd;
}
.space {
    width: 28px;
}
.value {
    width: 75px;
    height: 29px;
    border: 1px solid #777;
    background: #fff;
}
.unit {
    margin: 0 0 4px 4px;
    color: #2a8a3c;
}
.grid-area {
    flex: 1;
    margin: 34px 0 0 32px;
    background: #ababab;
}
table {
    border-collapse: collapse;
    border: 1px solid #8a8a8a;
    line-height: 18px;
}
th, td {
    width: 36px;
    height: 20px;
    padding: 0 2px;
    border: 1px solid #a8a8a8;
    background: #f0f0f0;
    font-weight: normal;
    text-align: left;
}
.row-head {
    width: 153px;
    padding: 0 4px;
    white-space: nowrap;
}
td {
    text-align: right;
}
.lime {
    background: #00ff00;
}
.yellow {
    background: #a4ff00;
}
.amber {
    background: #ffb900;
}
.orange {
    background: #ffa200;
}
.selected {
    outline: 1px dotted #000;
    outline-offset: -2px;
}

/* Taskbar */
.taskbar {
    display: flex;
    align-items: center;
    height: 50px;
    background: #101010;
    color: #fff;
}
.taskbar button {
    display: flex;
    align-items: center;
    justify-content: center;
    position: relative;
    height: 50px;
    border: 0;
}
.taskbar button svg {
    width: 30px;
    height: 30px;
}
.shell {
    width: 60px;
}
.grip {
    width: 4px;
    height: 26px;
    border: 1px solid #444;
    border-width: 0 1px;
}
.taskbar > .grip {
    margin: 0 13px 0 6px;
}
.tasks {
    display: flex;
}
.tasks button {
    width: 62px;
}
.tasks button::after {
    content: "";
    position: absolute;
    left: 6px;
    right: 5px;
    bottom: 0;
    height: 3px;
    background: #a9d3f5;
}
.tasks .multi::after {
    background: linear-gradient(90deg, #a9d3f5 40px, #7f9db6 40px);
}
.tasks .current {
    background: #484848;
}
.tasks .current::after {
    left: 0;
    right: 0;
}
.letter {
    font: bold 13px "Liberation Sans", sans-serif;
    fill: #fff;
}
.tray {
    display: flex;
    align-items: center;
    height: 50px;
    margin-left: auto;
}
.tray svg {
    width: 20px;
    height: 20px;
    margin-right: 9px;
}
.lang {
    margin: 0 16px 3px 14px;
}
.layout {
    margin: 0 17px 0 8px;
}
.clock {
    display: flex;
    flex-direction: column;
    width: 72px;
    line-height: 23px;
    text-align: center;
}
.tray .action {
    width: 22px;
    height: 22px;
    margin: 0 24px 0 21px;
}
.peek {
    width: 6px;
    height: 50px;
    border-left: 1px solid #666;
}
```
